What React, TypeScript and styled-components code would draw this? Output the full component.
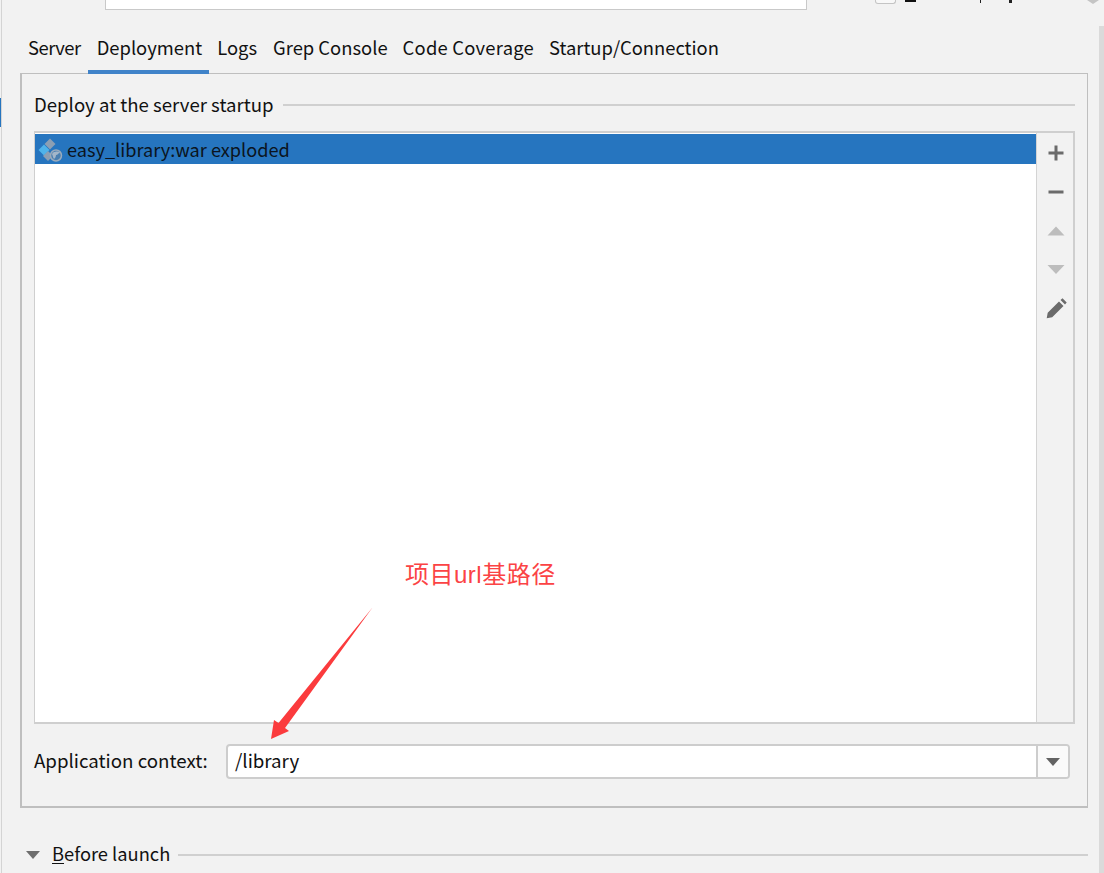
import React from "react";
import styled, { createGlobalStyle } from "styled-components";

const Global = createGlobalStyle`
  html, body { margin: 0; padding: 0; background: #f2f2f2; }
  body { font-family: "Noto Sans CJK SC", "Noto Sans", sans-serif; color: #111; }
  * { box-sizing: border-box; }
`;

const Page = styled.div`
  position: relative;
  display: flex;
  width: 1104px;
  height: 873px;
  overflow: hidden;
  background: #f2f2f2;
`;

const SideEdge = styled.div`
  flex: 0 0 2px;
  border-right: 1px solid #d4d4d4;
  padding-top: 98px;
`;

const SideMarker = styled.div`
  width: 1px;
  height: 29px;
  background: #2675bf;
`;

const Main = styled.div`
  flex: 0 0 1092px;
  display: flex;
  flex-direction: column;
`;

const Scrollbar = styled.div`
  flex: 0 0 10px;
  margin-top: 26px;
  background: #dadada;
`;

const TopRow = styled.div`
  display: flex;
  align-items: flex-start;
  height: 29px;
  padding-left: 103px;
`;

const TopField = styled.div`
  width: 702px;
  height: 10px;
  background: #fff;
  border: 1px solid #c9c9c9;
  border-top: none;
`;

const TopCheck = styled.div`
  width: 21px;
  height: 4px;
  margin-left: 68px;
  background: #f8f8f8;
  border: 1px solid #c4c4c4;
  border-top: none;
  border-radius: 0 0 3px 3px;
`;

const TopUnderline = styled.div`
  width: 11px;
  height: 2px;
  margin-left: 9px;
  background: #111;
`;

const TopDescender = styled.div<{ $gap: number; $w: number }>`
  width: ${(p) => p.$w}px;
  height: 3px;
  margin-left: ${(p) => p.$gap}px;
  background: #222;
`;

const TopChevron = styled.div`
  width: 0;
  height: 0;
  margin-left: 75px;
  border-left: 6px solid transparent;
  border-right: 6px solid transparent;
  border-top: 4px solid #c4c4c4;
`;

const TabBar = styled.div`
  display: flex;
  height: 44px;
  margin-left: 17px;
`;

const Tab = styled.div<{ $active?: boolean; $pad: string; $spacing?: number }>`
  height: 45px;
  padding: ${(p) => p.$pad};
  font-size: 18.4px;
  line-height: 37px;
  letter-spacing: ${(p) => p.$spacing ?? 0}px;
  white-space: nowrap;
  border-bottom: 4px solid ${(p) => (p.$active ? "#4083c9" : "transparent")};
  position: relative;
  z-index: 1;
`;

const Panel = styled.div`
  width: 1068px;
  height: 735px;
  margin-left: 18px;
  padding: 14px 12px 0 12px;
  border: 1px solid #bfbfbf;
  border-left-width: 2px;
  border-bottom-width: 2px;
  display: flex;
  flex-direction: column;
`;

const GroupHead = styled.div`
  display: flex;
  align-items: center;
  height: 36px;
  gap: 9px;
`;

const GroupTitle = styled.div`
  font-size: 18.6px;
  line-height: 32px;
  height: 36px;
  white-space: nowrap;
`;

const GroupLine = styled.div<{ $lift?: boolean }>`
  flex: 1;
  height: 2px;
  margin-bottom: ${(p) => (p.$lift ? "2px" : "0")};
  background: #d0d0d0;
`;

const ListBox = styled.div`
  display: flex;
  height: 593px;
  margin-top: 7px;
  border: 1px solid #cfcfcf;
  border-width: 2px 2px 2px 1px;
  background: #fff;
`;

const ListArea = styled.div`
  flex: 1;
  padding-top: 1px;
`;

const ListRow = styled.div`
  display: flex;
  align-items: center;
  gap: 3px;
  height: 30px;
  padding-left: 3px;
  background: #2675bf;
  font-size: 18.15px;
  color: #0b1420;
`;

const ToolColumn = styled.div`
  flex: 0 0 37px;
  display: flex;
  flex-direction: column;
  align-items: center;
  gap: 15px;
  padding: 8px 0 0 2px;
  background: #f2f2f2;
  border-left: 1px solid #d4d4d4;
`;

const ToolIcon = styled.svg`
  display: block;
  width: 24px;
  height: 24px;
`;

const ContextRow = styled.div`
  display: flex;
  align-items: center;
  height: 35px;
  margin-top: 20px;
`;

const ContextLabel = styled.div`
  width: 192px;
  font-size: 18.7px;
  line-height: 31px;
  height: 35px;
  white-space: nowrap;
`;

const ComboBox = styled.div`
  display: flex;
  width: 844px;
  height: 35px;
  border: 2px solid #cdcdcd;
  border-radius: 4px;
  background: #fff;
  overflow: hidden;
`;

const ComboValue = styled.div`
  flex: 1;
  padding-left: 7px;
  font-size: 18.7px;
  line-height: 28px;
`;

const ComboButton = styled.div`
  flex: 0 0 32px;
  display: flex;
  align-items: center;
  justify-content: center;
  background: #fafafa;
  border-left: 2px solid #cdcdcd;
`;

const ComboArrow = styled.div`
  width: 0;
  height: 0;
  border-left: 7px solid transparent;
  border-right: 7px solid transparent;
  border-top: 8px solid #636363;
`;

const BeforeRow = styled.div`
  display: flex;
  align-items: center;
  height: 36px;
  margin-top: 29px;
  margin-left: 24px;
  width: 1062px;
`;

const BeforeArrow = styled.div`
  width: 0;
  height: 0;
  border-left: 7px solid transparent;
  border-right: 7px solid transparent;
  border-top: 8px solid #6e6e6e;
  margin-right: 12px;
`;

const BeforeLabel = styled.div`
  font-size: 18.3px;
  line-height: 32px;
  height: 36px;
  white-space: nowrap;
  margin-right: 8px;
  u { text-underline-offset: 2px; }
`;

const Note = styled.div`
  position: absolute;
  left: 405px;
  top: 557px;
  font-family: "Liberation Sans", "Noto Sans CJK SC", sans-serif;
  font-size: 24px;
  letter-spacing: 0.5px;
  line-height: 36px;
  color: #fb4345;
  white-space: nowrap;
`;

const NoteArrow = styled.svg`
  position: absolute;
  left: 260px;
  top: 600px;
  width: 120px;
  height: 145px;
`;

const DeployIcon = () => (
  <svg width="26" height="28" viewBox="0 0 26 28" style={{ flex: "none" }}>
    <path d="M12 3.500l5.500 5.500L12 14.500 6.500 9z" fill="#8c9fb3" />
    <path d="M6 9.500l5.500 5.500L6 20.500.5 15z" fill="#4fb3ea" />
    <path d="M10 16l5 5-5 5-5-5z" fill="#8c9fb3" />
    <circle cx="18" cy="20.500" r="5.500" fill="#4a7fb0" stroke="#9aabbc" strokeWidth="1.500" />
    <path d="M14 19c2-3 6-3 8-1-2 0-2 2-4 2 0 2-1 3-2 4-1-1-1-3-2-5z" fill="#a3b6c9" />
  </svg>
);

export default function App() {
  return (
    <Page>
      <Global />
      <SideEdge>
        <SideMarker />
      </SideEdge>
      <Main>
        <TopRow>
          <TopField />
          <TopCheck />
          <TopUnderline />
          <TopDescender $gap={64} $w={1} />
          <TopDescender $gap={28} $w={3} />
          <TopChevron />
        </TopRow>
        <TabBar>
          <Tab $pad="0 7px 0 9px" $spacing={-0.5}>Server</Tab>
          <Tab $active $pad="0 7px 0 9px">Deployment</Tab>
          <Tab $pad="0 8px 0 8px">Logs</Tab>
          <Tab $pad="0 7px 0 8px">Grep Console</Tab>
          <Tab $pad="0 7px 0 8px" $spacing={0.23}>Code Coverage</Tab>
          <Tab $pad="0 7px 0 8px">Startup/Connection</Tab>
        </TabBar>
        <Panel>
          <GroupHead>
            <GroupTitle>Deploy at the server startup</GroupTitle>
            <GroupLine $lift />
          </GroupHead>
          <ListBox>
            <ListArea>
              <ListRow>
                <DeployIcon />
                easy_library:war exploded
              </ListRow>
            </ListArea>
            <ToolColumn>
              <ToolIcon viewBox="0 0 24 24">
                <path d="M10.500 4.500h3v6h6v3h-6v6h-3v-6h-6v-3h6z" fill="#6b6b6b" />
              </ToolIcon>
              <ToolIcon viewBox="0 0 24 24">
                <path d="M4.500 10.500h15v3h-15z" fill="#6b6b6b" />
              </ToolIcon>
              <ToolIcon viewBox="0 0 24 24">
                <path d="M12 7.500l8.500 9h-17z" fill="#bdbdbd" />
              </ToolIcon>
              <ToolIcon viewBox="0 0 24 24">
                <path d="M3.500 7h17L12 16z" fill="#bdbdbd" />
              </ToolIcon>
              <ToolIcon viewBox="0 0 24 24">
                <path d="M2.700 21.300l1-5.500L15 4.500l4.500 4.500L8.200 20.300zM16.500 3l2-1.700 4.200 4.200L21 7.500z" fill="#6b6b6b" />
              </ToolIcon>
            </ToolColumn>
          </ListBox>
          <ContextRow>
            <ContextLabel>Application context:</ContextLabel>
            <ComboBox>
              <ComboValue>/library</ComboValue>
              <ComboButton>
                <ComboArrow />
              </ComboButton>
            </ComboBox>
          </ContextRow>
        </Panel>
        <BeforeRow>
          <BeforeArrow />
          <BeforeLabel>
            <u>B</u>efore launch
          </BeforeLabel>
          <GroupLine />
        </BeforeRow>
      </Main>
      <Scrollbar />
      <Note>项目url基路径</Note>
      <NoteArrow viewBox="260 600 120 145">
        <path d="M372.500 607.500L285 728L289 731L271 739L274 720L278.500 723Z" fill="#fb3b3d" />
      </NoteArrow>
    </Page>
  );
}
